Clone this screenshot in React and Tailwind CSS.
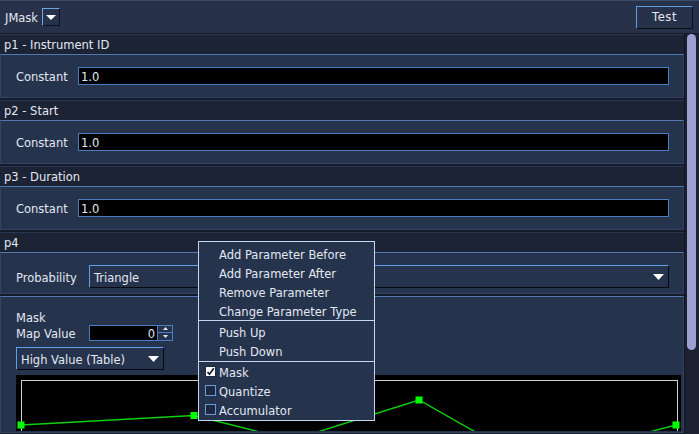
import React from "react";

const Tri = ({ w = 11, h = 6 }) => (
  <svg width={w} height={h} viewBox={`0 0 ${w} ${h}`}>
    <path d={`M0 0H${w}L${w / 2} ${h}Z`} fill="#ffffff" />
  </svg>
);

const T = ({ children, className = "" }) => (
  <span className={"relative top-[2px] " + className}>{children}</span>
);

function ConstSection({ title }) {
  return (
    <div className="flex flex-col">
      <div className="h-[20px] bg-[#1c2334] border-t border-[#2a3650] flex items-center pl-[4px]">
        <span className="relative top-[1px]">{title}</span>
      </div>
      <div className="h-[44px] bg-[#26334c] border border-[#34435f] border-t-[#4f78ad] flex items-center pl-[15px]">
        <T className="w-[62px]">Constant</T>
        <div className="w-[591px] h-[18px] bg-black border border-[#4a7cc0] pl-[2px] flex items-center">
          <T>1.0</T>
        </div>
      </div>
    </div>
  );
}

function MenuItem({ children, check }) {
  return (
    <div className="h-[19px] flex items-center relative pl-[20px]">
      {check !== undefined && (
        <div
          className={
            check
              ? "absolute left-[6px] top-[4px] w-[11px] h-[11px] bg-white border border-[#1c2a44] flex items-center justify-center"
              : "absolute left-[6px] top-[4px] w-[11px] h-[11px] bg-[#1c2740] border border-[#6d9ad6]"
          }
        >
          {check && (
            <svg width="9" height="9" viewBox="0 0 9 9">
              <path d="M1.5 5L3.5 7.2L7.8 1.2" stroke="#111a2c" strokeWidth="1.7" fill="none" />
            </svg>
          )}
        </div>
      )}
      <T>{children}</T>
    </div>
  );
}

export default function App() {
  return (
    <div className="w-[699px] h-[434px] overflow-hidden relative bg-[#151b28] text-[#e2e8f2] font-['DejaVu_Sans',sans-serif] text-[11.5px] leading-none">
      {/* toolbar */}
      <div className="h-[33px] bg-[#27324a] border-t border-[#3a4a68] flex items-center justify-between pl-[5px] pr-[6px]">
        <div className="flex items-center">
          <T>JMask</T>
          <div className="ml-[4px] w-[18px] h-[18px] border border-[#6fa6e6] border-r-[#0c1220] border-b-[#0c1220] bg-[#27324a] flex items-center justify-center">
            <Tri w={10} h={5} />
          </div>
        </div>
        <div className="w-[57px] h-[23px] border border-[#5c9ce0] border-r-[#0a0f1a] border-b-[#0a0f1a] bg-[#27324a] flex items-center justify-center tracking-[0.6px]">
          <span className="relative top-[1px]">Test</span>
        </div>
      </div>

      <div className="flex mt-[1px]">
        {/* content */}
        <div className="w-[684px] flex flex-col gap-[2px]">
          <ConstSection title="p1 - Instrument ID" />
          <ConstSection title="p2 - Start" />
          <ConstSection title="p3 - Duration" />
          <div className="flex flex-col">
            <div className="h-[20px] bg-[#1c2334] border-t border-[#2a3650] flex items-center pl-[4px]">
              <span className="relative top-[1px]">p4</span>
            </div>
            <div className="flex flex-col gap-[2px]">
              <div className="h-[42px] bg-[#26334c] border border-[#34435f] border-t-[#4f78ad] flex items-start pt-[12px] pl-[15px]">
                <div className="w-[73px] h-[23px] flex items-center">
                  <T>Probability</T>
                </div>
                <div className="w-[580px] h-[23px] bg-[#26334c] border border-[#5ea0ea] border-r-[#06090f] border-b-[#06090f] flex items-center justify-between pl-[4px] pr-[4px]">
                  <T>Triangle</T>
                  <Tri />
                </div>
              </div>
              <div className="h-[137px] bg-[#26334c] border border-[#34435f] border-t-[#4f78ad] flex flex-col pl-[15px] pt-[13px]">
                <div className="h-[14px] flex items-center">
                  <T>Mask</T>
                </div>
                <div className="h-[17px] flex items-center">
                  <T className="w-[73px]">Map Value</T>
                  <div className="w-[69px] h-[16px] bg-black border border-[#4a7cc0] flex items-center justify-end pr-[2px]">
                    <T>0</T>
                  </div>
                  <div className="w-[15px] h-[16px] flex flex-col border border-[#4a7cc0] border-l-0">
                    <div className="h-[7px] bg-[#26334c] border-b border-[#4a7cc0] flex items-center justify-center">
                      <svg width="5" height="3" viewBox="0 0 5 3"><path d="M0 3H5L2.5 0Z" fill="#dfe6f2" /></svg>
                    </div>
                    <div className="flex-1 bg-[#26334c] flex items-center justify-center">
                      <svg width="5" height="3" viewBox="0 0 5 3"><path d="M0 0H5L2.5 3Z" fill="#dfe6f2" /></svg>
                    </div>
                  </div>
                </div>
                <div className="mt-[6px] w-[148px] h-[23px] bg-[#26334c] border border-[#5ea0ea] border-r-[#06090f] border-b-[#06090f] flex items-center justify-between pl-[4px] pr-[4px]">
                  <T>High Value (Table)</T>
                  <Tri />
                </div>
                <div className="mt-[5px] w-[665px] h-[56px] bg-black relative">
                  <svg width="665" height="56" viewBox="0 0 665 56" className="absolute left-0 top-0">
                    <rect x="5.5" y="5.5" width="656" height="100" fill="none" stroke="#cfcfcf" strokeWidth="1" />
                    <polyline
                      points="5,50 178,40.5 276,65 403,25 514,88 660,50"
                      fill="none"
                      stroke="#0fcf0f"
                      strokeWidth="1.4"
                    />
                    <rect x="1.5" y="46.5" width="7" height="7" fill="#00ff00" />
                    <rect x="174.5" y="37" width="7" height="7" fill="#00ff00" />
                    <rect x="399.5" y="21.5" width="7" height="7" fill="#00ff00" />
                    <rect x="656.5" y="46.5" width="7" height="7" fill="#00ff00" />
                  </svg>
                </div>
              </div>
            </div>
          </div>
        </div>
        {/* scrollbar */}
        <div className="w-[15px] h-[401px] bg-[#1b2131] border-l border-[#0f1420] pl-[2px]">
          <div className="w-[9px] h-[316px] rounded-full bg-[#9c9ed2]" />
        </div>
      </div>

      {/* popup menu */}
      <div className="absolute left-[198px] top-[241px] w-[177px] h-[180px] bg-[#26334c] border border-[#c6d6ee] flex flex-col">
        <div className="pt-[2px] h-[78px]">
          <MenuItem>Add Parameter Before</MenuItem>
          <MenuItem>Add Parameter After</MenuItem>
          <MenuItem>Remove Parameter</MenuItem>
          <MenuItem>Change Parameter Type</MenuItem>
        </div>
        <div className="border-t border-[#c6d6ee] pt-[1px] h-[41px]">
          <MenuItem>Push Up</MenuItem>
          <MenuItem>Push Down</MenuItem>
        </div>
        <div className="border-t border-[#c6d6ee]">
          <MenuItem check={true}>Mask</MenuItem>
          <MenuItem check={false}>Quantize</MenuItem>
          <MenuItem check={false}>Accumulator</MenuItem>
        </div>
      </div>
    </div>
  );
}
